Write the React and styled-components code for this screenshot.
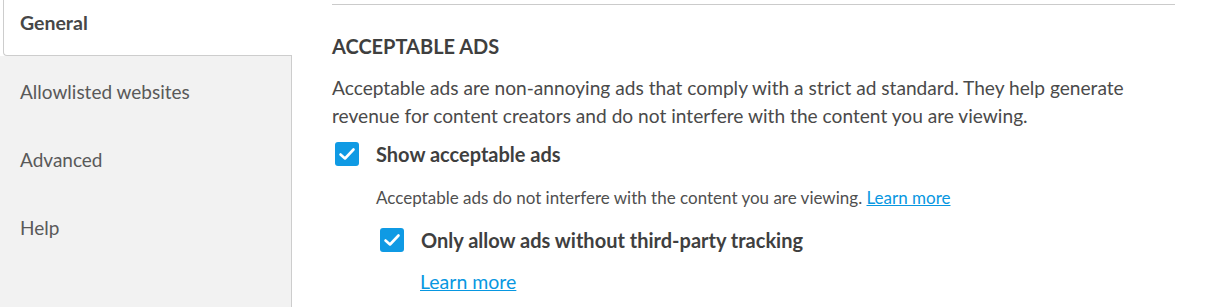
import React from "react";
import styled, { createGlobalStyle } from "styled-components";

const GlobalStyle = createGlobalStyle`
  html, body {
    margin: 0;
    padding: 0;
    background: #fff;
  }
  body {
    font-family: "Lato", "Liberation Sans", sans-serif;
    color: #4a4a4a;
  }
`;

const navItems = ["Allowlisted websites", "Advanced", "Help"];

const CheckIcon = () => (
  <svg width="18" height="18" viewBox="0 0 18 18" fill="none">
    <polyline
      points="2.5,9.5 7,13.5 15.5,4.5"
      stroke="#fff"
      strokeWidth="2.6"
      strokeLinecap="round"
      strokeLinejoin="round"
    />
  </svg>
);

export default function App() {
  return (
    <>
      <GlobalStyle />
      <Layout>
        <Sidebar>
          <ActiveTab>General</ActiveTab>
          <NavPanel>
            {navItems.map((item) => (
              <NavItem key={item}>{item}</NavItem>
            ))}
          </NavPanel>
        </Sidebar>
        <Content>
          <Divider />
          <Heading>Acceptable ads</Heading>
          <Paragraph>
            Acceptable ads are non-annoying ads that comply with a strict ad
            standard. They help generate revenue for content creators and do
            not interfere with the content you are viewing.
          </Paragraph>
          <OptionRow indent={3}>
            <Checkbox>
              <CheckIcon />
            </Checkbox>
            <OptionLabel>Show acceptable ads</OptionLabel>
          </OptionRow>
          <Note>
            Acceptable ads do not interfere with the content you are viewing.{" "}
            <Link href="#">Learn more</Link>
          </Note>
          <OptionRow indent={48}>
            <Checkbox>
              <CheckIcon />
            </Checkbox>
            <OptionLabel>Only allow ads without third-party tracking</OptionLabel>
          </OptionRow>
          <LinkLine>
            <Link href="#">Learn more</Link>
          </LinkLine>
        </Content>
      </Layout>
    </>
  );
}

const Layout = styled.div`
  display: flex;
  height: 100vh;
`;

const Sidebar = styled.nav`
  width: 292px;
  flex-shrink: 0;
  display: flex;
  flex-direction: column;
`;

const ActiveTab = styled.div`
  height: 56px;
  margin-left: 3px;
  padding: 0 0 10px 16px;
  display: flex;
  align-items: center;
  background: #fff;
  border-left: 1px solid #cdcdcd;
  border-bottom: 1px solid #cdcdcd;
  border-bottom-left-radius: 4px;
  box-sizing: border-box;
  font-size: 19.5px;
  font-weight: 700;
  color: #474747;
`;

const NavPanel = styled.div`
  flex: 1;
  background: #f2f2f2;
  border-right: 1px solid #cdcdcd;
  padding-top: 1px;
`;

const NavItem = styled.div`
  height: 68px;
  padding-left: 20px;
  display: flex;
  align-items: center;
  font-size: 19px;
  color: #595959;
`;

const Content = styled.main`
  flex: 1;
  padding: 4px 40px 0 40px;
  max-width: 844px;
`;

const Divider = styled.div`
  height: 1px;
  background: #cbcbcb;
`;

const Heading = styled.h2`
  margin: 29px 0 0;
  line-height: 24px;
  font-size: 20px;
  font-weight: 700;
  text-transform: uppercase;
  color: #3f3f3f;
`;

const Paragraph = styled.p`
  margin: 16px 0 0;
  font-size: 19.15px;
  line-height: 28px;
  color: #4a4a4a;
`;

const OptionRow = styled.div`
  display: flex;
  align-items: center;
  gap: 17px;
  height: 24px;
  margin-top: ${({ indent }) => (indent > 10 ? 18 : 12)}px;
  padding-left: ${({ indent }) => indent}px;
`;

const Checkbox = styled.span`
  width: 24px;
  height: 24px;
  border-radius: 3px;
  background: #0f9ae4;
  display: flex;
  align-items: center;
  justify-content: center;
`;

const OptionLabel = styled.span`
  font-size: 20px;
  font-weight: 700;
  color: #3f3f3f;
`;

const Note = styled.p`
  margin: 20px 0 0;
  padding-left: 44px;
  font-size: 17px;
  line-height: 24px;
  color: #4f4f4f;
`;

const LinkLine = styled.div`
  margin-top: 18px;
  padding-left: 88px;
  font-size: 19.5px;
  line-height: 24px;
`;

const Link = styled.a`
  color: #0797e1;
  text-decoration: underline;
`;
